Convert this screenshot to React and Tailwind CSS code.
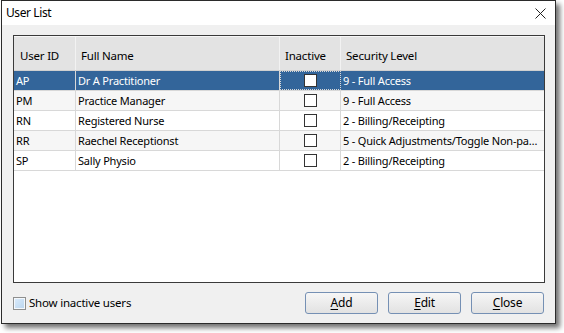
import React from 'react';

const users = [
    { id: 'AP', name: 'Dr A Practitioner', level: '9 - Full Access' },
    { id: 'PM', name: 'Practice Manager', level: '9 - Full Access' },
    { id: 'RN', name: 'Registered Nurse', level: '2 - Billing/Receipting' },
    { id: 'RR', name: 'Raechel Receptionst', level: '5 - Quick Adjustments/Toggle Non-patient Billing' },
    { id: 'SP', name: 'Sally Physio', level: '2 - Billing/Receipting' },
];

function Button({ label }) {
    return (
        <button className="w-[73px] h-[22px] rounded-[3px] border border-[#7590b4] bg-gradient-to-b from-[#f6f6f6] to-[#e2e2e2] text-[12px] text-black leading-none">
            <span className="underline underline-offset-2">{label[0]}</span>
            {label.slice(1)}
        </button>
    );
}

export default function App() {
    return (
        <div className="w-[564px] h-[333px] bg-white p-0 font-['Noto_Sans',sans-serif] text-[11px] tracking-[-0.2px] text-black">
            <div className="ml-[1px] w-[555px] h-[324px] border border-[#2b2b2b] bg-[#f0f0f0] flex flex-col shadow-[4px_4px_5px_rgba(0,0,0,0.55)]">
                {/* Title bar */}
                <div className="h-[25px] bg-white flex items-center justify-between pl-[4px] pr-[9px]">
                    <span className="text-[12px] tracking-[-0.4px]">User List</span>
                    <svg width="11" height="11" viewBox="0 0 11 11">
                        <path d="M0.5 0.5 L10.5 10.5 M10.5 0.5 L0.5 10.5" stroke="#222" strokeWidth="1" />
                    </svg>
                </div>

                <div className="flex-1 flex flex-col px-[11px] pt-[10px] pb-[9px]">
                    {/* Grid */}
                    <div className="w-[532px] h-[248px] border border-[#3a3a3a] bg-white flex flex-col">
                        <div className="h-[35px] grid grid-cols-[62px_204px_61px_203px] bg-[#e3e3e3] border-t border-[#f7f7f7] border-b border-b-[#d0d0d0] text-[11.5px]">
                            <div className="flex items-center pt-[4px] pl-[6px] border-r border-[#f2f2f2]">User ID</div>
                            <div className="flex items-center pt-[4px] pl-[5px] border-r border-[#f2f2f2]">Full Name</div>
                            <div className="flex items-center pt-[4px] pl-[5px] border-r border-[#f2f2f2]">Inactive</div>
                            <div className="flex items-center pt-[4px] pl-[5px]">Security Level</div>
                        </div>
                        {users.map((u, i) => {
                            const selected = i === 0;
                            const rowBg = selected ? 'bg-[#33659a] text-white' : i % 2 === 1 ? 'bg-[#f6f6f6]' : 'bg-white';
                            return (
                                <div key={u.id} className={`h-[20px] grid grid-cols-[62px_204px_61px_203px] border-b border-[#d8d8d8] ${rowBg}`}>
                                    <div className="flex items-center pt-[2px] pl-[2px] border-r border-[#d8d8d8]">{u.id}</div>
                                    <div className="flex items-center pt-[2px] pl-[2px] border-r border-[#d8d8d8]">{u.name}</div>
                                    <div className={`flex items-center justify-center border-r border-[#d8d8d8] ${selected ? 'border border-dotted border-[#1a1a1a]' : ''}`}>
                                        <div className="w-[13px] h-[13px] border border-[#333] bg-white"></div>
                                    </div>
                                    <div className="flex items-center pt-[2px] pl-[2px] pr-[3px] min-w-0">
                                        <span className="truncate">{u.level}</span>
                                    </div>
                                </div>
                            );
                        })}
                    </div>

                    {/* Footer */}
                    <div className="mt-[9px] flex items-center">
                        <label className="flex items-center gap-[3px]">
                            <span className="w-[13px] h-[13px] border border-[#8e8f8f] bg-gradient-to-br from-[#dcecfc] to-[#b9d5ee] shadow-[inset_0_0_0_1px_#f4f8fc]"></span>
                            <span className="text-[11.5px]">Show inactive users</span>
                        </label>
                        <div className="ml-auto flex gap-[10px]">
                            <Button label="Add" />
                            <Button label="Edit" />
                            <Button label="Close" />
                        </div>
                    </div>
                </div>
            </div>
        </div>
    );
}
